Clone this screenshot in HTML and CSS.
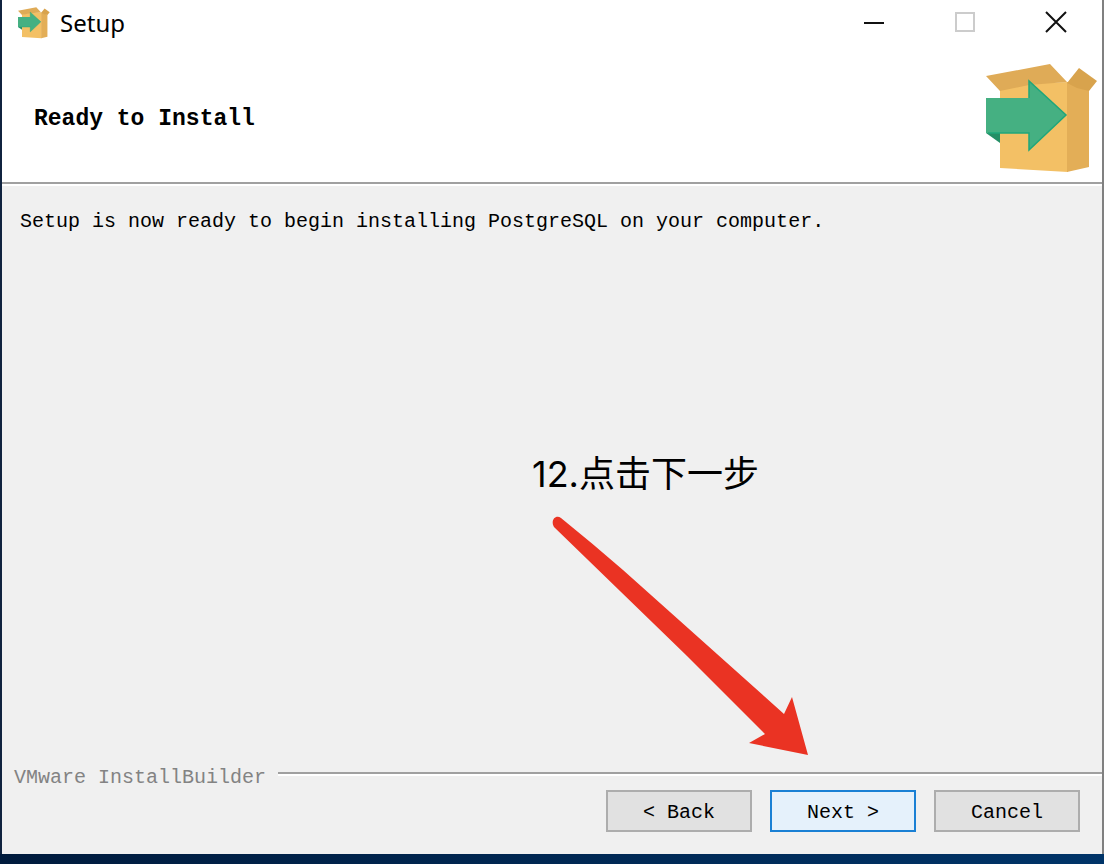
FILE: index.html
```html
<!DOCTYPE html>
<html lang="en">
<head>
<meta charset="utf-8">
<title>Setup</title>
<link rel="stylesheet" href="styles.css">
</head>
<body>
<svg class="defs" aria-hidden="true">
  <symbol id="box" viewBox="0 0 112 110">
    <path fill="#f3c065" d="M14 26 35 20 82 18 82 108 14 104z"/>
    <path fill="#e3ae57" d="M81 18 103 26 103 103 81 108z"/>
    <path fill="#dfab57" d="M0 12 64 0 81 18 43 21 14 27z"/>
    <path fill="#d8a34d" d="M81 19 93 4 111 17 103 27 91 24z"/>
    <path fill="#258f66" d="M0 69 14 69 14 79z"/>
    <path fill="#45b082" d="M0 34H43V17L80 51 43 86V69H0z"/>
    <path fill="none" stroke="#1fa67b" stroke-width="1.5" d="M43 34V17L80 51 43 86V69H2"/>
  </symbol>
</svg>
<main class="window">
  <header class="titlebar">
    <svg class="app-icon" aria-hidden="true"><use href="#box"/></svg>
    <span class="app-name">Setup</span>
    <div class="window-controls">
      <button class="control" type="button" aria-label="Minimize"><svg viewBox="0 0 22 22"><path d="M1 12H21"/></svg></button>
      <button class="control" type="button" aria-label="Maximize" disabled><svg viewBox="0 0 22 22"><path d="M2 2H20V20H2z"/></svg></button>
      <button class="control" type="button" aria-label="Close"><svg viewBox="0 0 22 22"><path d="M1 1 21 21M21 1 1 21"/></svg></button>
    </div>
  </header>
  <section class="banner">
    <h1 class="heading">Ready to Install</h1>
    <svg class="banner-icon" aria-hidden="true"><use href="#box"/></svg>
  </section>
  <section class="content">
    <p class="message">Setup is now ready to begin installing PostgreSQL on your computer.</p>
  </section>
  <footer class="footer">
    <div class="brand-row"><span class="brand">VMware InstallBuilder</span><span class="rule"></span></div>
    <div class="actions">
      <button class="button" type="button">&lt; Back</button>
      <button class="button primary" type="button">Next &gt;</button>
      <button class="button" type="button">Cancel</button>
    </div>
  </footer>
  <div class="callout">
    <p class="callout-text" lang="zh-CN">12.点击下一步</p>
    <svg class="arrow" viewBox="0 0 258 240" aria-hidden="true"><path fill="#ea3323" d="M9 2 Q40 27 71 54 L232 198 240 181 256 239 197 227 213 218 135 140 2 11 C-2 4 4 -2 9 2z"/></svg>
  </div>
</main>
</body>
</html>
```
FILE: styles.css
```css
* { box-sizing: border-box; }

body {
  margin: 0;
  min-height: 100vh;
  display: flex;
  padding: 0 0 10px;
  background: linear-gradient(90deg, #001b3d, #003468);
}

.defs { position: absolute; width: 0; height: 0; }

.window {
  position: relative;
  flex: 1;
  display: flex;
  flex-direction: column;
  border: 0 solid;
  border-width: 0 2px;
  border-image: linear-gradient(90deg, #10233f 50%, #808080 50%) 0 2;
  background: #f0f0f0;
  color: #000;
  font: 20px/24px "Liberation Mono", monospace;
}

.titlebar {
  display: flex;
  align-items: center;
  height: 46px;
  padding-left: 16px;
  background: #fff;
}

.app-icon { width: 32px; height: 32px; }

.app-name {
  margin-left: 10px;
  font: 24px/32px "Noto Sans", sans-serif;
}

.window-controls { display: flex; margin: 0 1px 2px auto; }

.control {
  width: 91px;
  height: 44px;
  padding: 0;
  border: 0;
  background: none;
}

.control svg {
  display: block;
  width: 22px;
  height: 22px;
  margin: 0 auto;
  fill: none;
  stroke: #111;
  stroke-width: 2;
}

.control:disabled svg { stroke: #ccc; }

.banner {
  display: flex;
  align-items: center;
  justify-content: space-between;
  padding: 18px 4px 8px 32px;
  border-bottom: 2px solid #a0a0a0;
  background: #fff;
}

.heading { margin: 0; font-size: 23px; line-height: 28px; }

.banner-icon { width: 112px; height: 110px; }

.content {
  flex: 1;
  padding: 24px 18px;
  border-top: 2px solid #fff;
}

.message { margin: 0; }

.footer { padding: 0 22px 22px 12px; }

.brand-row {
  display: flex;
  align-items: center;
  gap: 12px;
  margin-right: -22px;
  color: #838383;
}

.rule {
  flex: 1;
  height: 4px;
  margin-bottom: 8px;
  border-top: 2px solid #a0a0a0;
  border-bottom: 2px solid #fff;
}

.actions { display: flex; justify-content: flex-end; gap: 18px; }

.button {
  width: 146px;
  height: 42px;
  padding: 4px 0 0;
  border: 2px solid #adadad;
  border-radius: 0;
  background: #e1e1e1;
  color: #000;
  font: inherit;
}

.primary { border-color: #1a80d4; background: #e5f1fb; }

.callout {
  position: absolute;
  left: 530px;
  top: 448px;
}

.callout-text {
  margin: 0;
  font: 36px/52px Inter, "Noto Sans CJK SC", sans-serif;
  white-space: nowrap;
}

.arrow {
  display: block;
  width: 258px;
  height: 240px;
  margin: 16px 0 0 20px;
}
```
